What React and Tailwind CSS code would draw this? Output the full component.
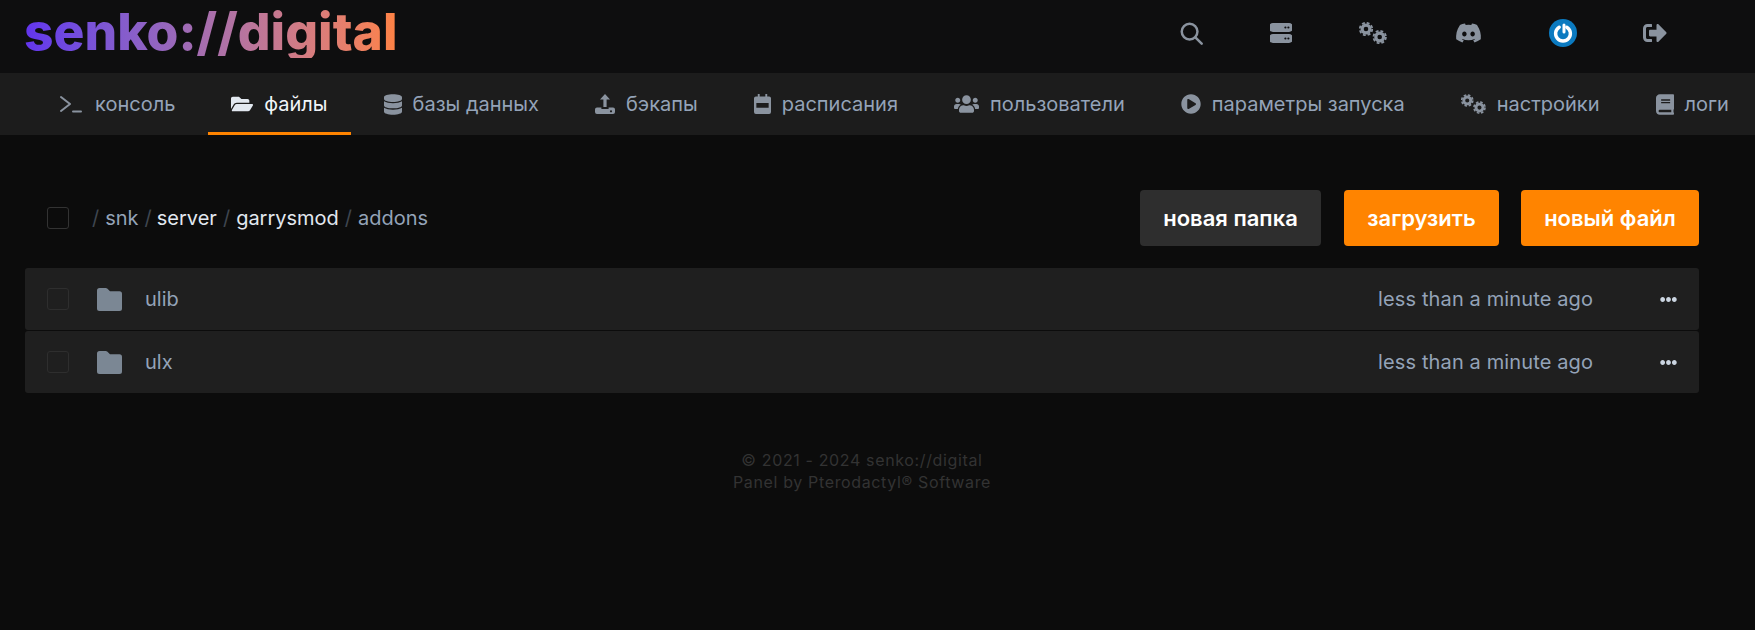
import React from 'react';
import {
  FaDiscord, FaSignOutAlt, FaFolderOpen, FaDatabase,
  FaUsers, FaPlayCircle, FaBook, FaEllipsisH,
} from 'react-icons/fa';

const SearchIcon = ({ className }) => (
  <svg viewBox="0 0 24 24" className={className} fill="none" stroke="currentColor" strokeWidth="2.6" strokeLinecap="round">
    <circle cx="10" cy="10" r="8.2" />
    <path d="M16 16l6.6 6.6" />
  </svg>
);

const ServerIcon = ({ className }) => (
  <svg viewBox="0 0 22 20" className={className} fill="currentColor">
    <path fillRule="evenodd" d="M3 0h16a3 3 0 0 1 0 9H3a3 3 0 0 1 0-9Zm12.4 3.4a1.1 1.1 0 1 0 0 2.2 1.1 1.1 0 0 0 0-2.2Zm3 0a1.1 1.1 0 1 0 0 2.2 1.1 1.1 0 0 0 0-2.2ZM3 11h16a3 3 0 0 1 0 9H3a3 3 0 0 1 0-9Zm12.4 3.4a1.1 1.1 0 1 0 0 2.2 1.1 1.1 0 0 0 0-2.2Zm3 0a1.1 1.1 0 1 0 0 2.2 1.1 1.1 0 0 0 0-2.2Z" />
  </svg>
);

// two separate gears, top left and bottom right
const GearsIcon = ({ className }) => (
  <svg viewBox="0 0 28 22" className={className} fill="none" stroke="currentColor">
    <circle cx="7" cy="7" r="3.9" strokeWidth="3.2" />
    <circle cx="7" cy="7" r="6.2" strokeWidth="1.8" strokeDasharray="2.9 1.97" />
    <circle cx="20.700" cy="15" r="3.9" strokeWidth="3.2" />
    <circle cx="20.700" cy="15" r="6.2" strokeWidth="1.8" strokeDasharray="2.9 1.97" />
  </svg>
);

const PowerIcon = ({ className }) => (
  <svg viewBox="0 0 28 28" className={className}>
    <circle cx="14" cy="14" r="14" fill="#0b7ac0" />
    <path d="M10.2 8.2a7.4 7.4 0 1 0 7.6 0" fill="none" stroke="#fff" strokeWidth="3.4" strokeLinecap="round" />
    <path d="M15 6v7" fill="none" stroke="#fff" strokeWidth="3" strokeLinecap="round" />
  </svg>
);

const TerminalIcon = ({ className }) => (
  <svg viewBox="0 0 24 18" className={className} fill="none" stroke="currentColor" strokeWidth="2" strokeLinecap="round" strokeLinejoin="round">
    <path d="M1 2l9 7-9 7" />
    <path d="M13 16.500h8" />
  </svg>
);

const UploadIcon = ({ className }) => (
  <svg viewBox="0 0 20 20" className={className} fill="currentColor">
    <path d="M10 0l5 5.600h-3.400V13H8.400V5.600H5z" />
    <path fillRule="evenodd" d="M2 13.500h4.400V15h7.200v-1.500H18a2 2 0 0 1 2 2V18a2 2 0 0 1-2 2H2a2 2 0 0 1-2-2v-2.500a2 2 0 0 1 2-2Zm14 2.700a1.100 1.100 0 1 0 0 2.200 1.100 1.100 0 0 0 0-2.200Z" />
  </svg>
);

const CalendarIcon = ({ className }) => (
  <svg viewBox="0 0 18 21" className={className} fill="currentColor">
    <path fillRule="evenodd" d="M4 0h2v2.500h6V0h2v2.500h2a2 2 0 0 1 2 2V19a2 2 0 0 1-2 2H2a2 2 0 0 1-2-2V4.500a2 2 0 0 1 2-2h2ZM2.500 9.500v5h13v-5Z" />
  </svg>
);

const FolderIcon = ({ className }) => (
  <svg viewBox="0 0 25 23" className={className} fill="currentColor">
    <path d="M2.500 0h6.300a2 2 0 0 1 1.400.6L13 3.200h9.500A2.500 2.500 0 0 1 25 5.700v14.800a2.500 2.500 0 0 1-2.500 2.500h-20A2.500 2.500 0 0 1 0 20.500v-18A2.500 2.500 0 0 1 2.500 0Z" />
  </svg>
);

const tabs = [
  { label: 'консоль', icon: TerminalIcon, size: 'w-[24px] h-[18px]' },
  { label: 'файлы', icon: FaFolderOpen, size: 'w-[22px] h-[20px]', active: true },
  { label: 'базы данных', icon: FaDatabase, size: 'w-[18px] h-[21px]' },
  { label: 'бэкапы', icon: UploadIcon, size: 'w-[20px] h-[20px]' },
  { label: 'расписания', icon: CalendarIcon, size: 'w-[17px] h-[20px]' },
  { label: 'пользователи', icon: FaUsers, size: 'w-[25px] h-[20px]' },
  { label: 'параметры запуска', icon: FaPlayCircle, size: 'w-[20px] h-[20px]' },
  { label: 'настройки', icon: GearsIcon, size: 'w-[25px] h-[20px]' },
  { label: 'логи', icon: FaBook, size: 'w-[18px] h-[21px]' },
];

const rows = ['ulib', 'ulx'];

const Checkbox = ({ className }) => (
  <div className={`w-[22px] h-[22px] rounded-[3px] border bg-transparent ${className}`} />
);

const Slash = () => <span className="text-[#3f4650] mx-[6px]">/</span>;

const App = () => {
  return (
    <div className="h-[630px] overflow-hidden bg-[#0c0c0c] font-['Inter',sans-serif] text-[20px]">
      <header className="h-[73px] bg-[#0e0e0f] flex items-center">
        <div className="ml-[24px] -mt-[9px] text-[51.5px] leading-none font-extrabold bg-gradient-to-r from-[#6233ee] to-[#ff8242] bg-clip-text text-transparent">
          senko://digital
        </div>
        <div className="ml-auto mr-[88px] flex items-center gap-[67px] text-[#8a939f] -mt-[7px]">
          <SearchIcon className="w-[23px] h-[23px]" />
          <ServerIcon className="w-[22px] h-[20px]" />
          <GearsIcon className="w-[28px] h-[22px]" />
          <FaDiscord className="ml-px w-[27px] h-[24px]" />
          <PowerIcon className="w-[28px] h-[28px]" />
          <FaSignOutAlt className="-ml-px w-[24px] h-[24px]" />
        </div>
      </header>

      <nav className="h-[62px] bg-[#1c1c1c] flex pl-[32px]">
        {tabs.map((tab) => (
          <a
            key={tab.label}
            className={`mx-[5px] px-[23px] flex items-center gap-[11px] whitespace-nowrap border-b-[3px] border-t-[3px] border-t-transparent ${
              tab.active ? 'border-b-[#ff8400] text-[#f1f5f9]' : 'border-b-transparent text-[#94a3b8]'
            }`}
          >
            <tab.icon className={`${tab.size} ${tab.active ? 'text-[#e2e8f0]' : 'text-[#8a939f]'}`} />
            {tab.label}
          </a>
        ))}
      </nav>

      <main className="ml-[25px] w-[1674px]">
        <div className="flex items-center mt-[55px] mb-[22px]">
          <Checkbox className="ml-[22px] border-[#333]" />
          <div className="ml-[23px] flex items-center text-[#94a3b8]">
            <span className="text-[#3f4650] mr-[6px]">/</span>
            <span>snk</span>
            <Slash />
            <span className="-ml-px text-[#e2e8f0]">server</span>
            <Slash />
            <span className="text-[#e2e8f0]">garrysmod</span>
            <Slash />
            <span>addons</span>
          </div>
          <div className="ml-auto flex gap-[22px]">
            <button className="h-[56px] w-[181px] rounded bg-[#2e2e2e] text-white font-semibold text-[22px]">новая папка</button>
            <button className="ml-px h-[56px] w-[155px] rounded bg-[#ff8400] text-white font-semibold text-[22px]">загрузить</button>
            <button className="h-[56px] w-[178px] rounded bg-[#ff8400] text-white font-semibold text-[22px]">новый файл</button>
          </div>
        </div>

        <div className="flex flex-col gap-[1px]">
          {rows.map((name) => (
            <div key={name} className="h-[62px] rounded-[3px] bg-[#1f1f1f] flex items-center">
              <Checkbox className="ml-[22px] border-[#2e2e2e]" />
              <FolderIcon className="ml-[28px] w-[25px] h-[23px] text-[#7b8794]" />
              <span className="ml-[23px] text-[#94a3b8]">{name}</span>
              <span className="ml-auto text-[#94a3b8] tracking-[0.006em]">less than a minute ago</span>
              <FaEllipsisH className="ml-[67px] mr-[22px] w-[17px] h-[17px] text-[#cbd5e1]" />
            </div>
          ))}
        </div>

        <footer className="mt-[56px] text-center text-[16px] leading-[22px] tracking-[0.04em] text-[#333]">
          <p>© 2021 - 2024 senko://digital</p>
          <p>Panel by Pterodactyl® Software</p>
        </footer>
      </main>
    </div>
  );
};

export default App;
